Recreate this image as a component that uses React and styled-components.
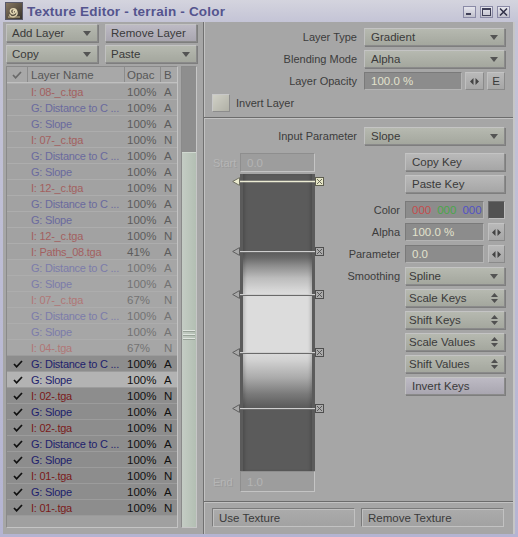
import React from 'react';
import styled, { createGlobalStyle } from 'styled-components';

const Global = createGlobalStyle`
  html, body { margin: 0; padding: 0; background: #a6a6a6; }
  body { font-family: "Liberation Sans", Arial, sans-serif; font-size: 11px; color: #333; }
  * { box-sizing: border-box; }
`;

const Window = styled.div`
  width: 518px;
  height: 537px;
  display: flex;
  flex-direction: column;
  background: linear-gradient(to bottom, #d4d4de, #c4c4d6 22px, #b4b4d2);
  padding: 0 3px 3px 3px;
  overflow: hidden;
`;

const TitleBar = styled.div`
  height: 22px;
  flex: none;
  display: flex;
  align-items: center;
  padding: 0 5px 0 2px;
  gap: 4px;
`;

const TitleText = styled.div`
  flex: 1;
  font-family: "Liberation Sans", Arial, sans-serif;
  font-weight: bold;
  font-size: 13.5px;
  color: #54548e;
  letter-spacing: 0.2px;
  padding-top: 1px;
`;

const WinButtons = styled.div`
  display: flex;
  gap: 4px;
  padding-top: 2px;
`;

const WinButton = styled.div`
  width: 13px;
  height: 12px;
  background: linear-gradient(#e6e6ee, #c0c0cc);
  border: 1px solid #8a8aa6;
  display: flex;
  align-items: center;
  justify-content: center;
`;

const Main = styled.div`
  flex: 1;
  display: flex;
  background: #a6a6a6;
  min-height: 0;
`;

const LeftPanel = styled.div`
  width: 200px;
  flex: none;
  display: flex;
  flex-direction: column;
  padding: 2px 4px 6px 3px;
`;

const ButtonGrid = styled.div`
  display: grid;
  grid-template-columns: 92px 92px;
  column-gap: 7px;
  row-gap: 3px;
`;

const Button = styled.div`
  height: 18px;
  min-width: 0;
  display: flex;
  align-items: center;
  justify-content: space-between;
  padding: 0 ${p => (p.$pad ?? 6)}px 0 ${p => (p.$pad ?? 6)}px;
  background: ${p => p.$tint
    ? 'linear-gradient(#bdbac4, #a9a6b0)'
    : 'linear-gradient(#b9b9b9, #a6a6a6)'};
  border: 1px solid #8a8a8a;
  border-top-color: #c4c4c4;
  border-left-color: #c0c0c0;
  box-shadow: 1px 1px 0 #7e7e7e;
  color: #3a3a3a;
  font-size: 11.5px;
  white-space: nowrap;
`;

const Dropdown = styled(Button)`
  background: linear-gradient(#b6b9b0, #a4a79e);
  padding: 0 6px 0 ${p => (p.$pad ?? 6)}px;
`;

const ListArea = styled.div`
  flex: 1;
  margin-top: 3px;
  display: flex;
  gap: 3px;
  min-height: 0;
`;

const ListBox = styled.div`
  width: 172px;
  display: flex;
  flex-direction: column;
  background: #a1a1a1;
  border: 1px solid #8a8a8a;
  border-right-color: #c4c4c4;
  border-bottom-color: #c4c4c4;
  overflow: hidden;
`;

const Cols = styled.div`
  display: grid;
  grid-template-columns: 20px 97px 36px 1fr;
  height: 16px;
  align-items: center;
`;

const HeaderRow = styled(Cols)`
  background: #a8a8a8;
  border-bottom: 1px solid #c0c0c0;
  color: #575757;
  height: 16px;
`;

const HeaderCell = styled.div`
  height: 100%;
  display: flex;
  align-items: center;
  justify-content: ${p => (p.$center ? 'center' : 'flex-start')};
  padding-left: ${p => p.$pl ?? 0}px;
  border-left: ${p => (p.$first ? 'none' : '1px solid #8c8c8c')};
  font-size: 11.5px;
`;

const Row = styled(Cols)`
  background: ${p => (p.$sel ? '#b3b3b3' : p.$checked ? '#8d8d8d' : p.$faint ? '#a6a6a6' : '#a2a2a2')};
  border-top: 1px solid ${p => (p.$checked ? '#9c9c9c' : '#adadad')};
  font-size: 11.5px;
`;

const CheckCell = styled.div`
  display: flex;
  align-items: center;
  justify-content: center;
  padding-left: 1px;
`;

const NameCell = styled.div`
  padding-left: 4px;
  white-space: nowrap;
  overflow: hidden;
  font-size: 11px;
  letter-spacing: -0.25px;
  color: ${p => p.$color};
`;

const NumCell = styled.div`
  padding-left: ${p => p.$pl}px;
  white-space: nowrap;
  color: ${p => p.$color};
`;

const ListFill = styled.div`
  flex: 1;
  background: #a0a0a0;
  border-top: 1px solid #9a9a9a;
`;

const Scrollbar = styled.div`
  width: 16px;
  display: flex;
  flex-direction: column;
  border: 1px solid #8a8a8a;
  border-right-color: #c6c6c6;
  border-bottom-color: #c6c6c6;
  background: #8f8f8f;
`;

const ScrollTrack = styled.div`
  height: 85px;
  flex: none;
  background: #8e8e8e;
`;

const ScrollThumb = styled.div`
  flex: 1;
  background: linear-gradient(to right, #c4ccc4, #b3bfb3);
  border-top: 1px solid #d0d8d0;
  display: flex;
  flex-direction: column;
  align-items: center;
  padding-top: 177px;
  gap: 3px;
`;

const Grip = styled.div`
  width: 12px;
  height: 1px;
  background: #e0e6e0;
  box-shadow: 0 1px 0 #98a298;
`;

const RightPanel = styled.div`
  flex: 1;
  display: flex;
  flex-direction: column;
  border-left: 1px solid #707070;
  box-shadow: inset 1px 0 0 #c2c2c2;
  border-right: 2px solid #c6c6c6;
`;

const TopSection = styled.div`
  display: flex;
  flex-direction: column;
  gap: 4px;
  padding: 6px 8px 5px 8px;
`;

const FieldRow = styled.div`
  display: grid;
  grid-template-columns: 1fr ${p => p.$w}px;
  column-gap: ${p => p.$gap ?? 7}px;
  align-items: center;
  height: 18px;
  margin-top: ${p => p.$mt ?? 0}px;
`;

const Label = styled.div`
  text-align: right;
  color: #3c3c3c;
  font-size: 11px;
  white-space: nowrap;
`;

const Inline = styled.div`
  display: flex;
  gap: ${p => p.$gap ?? 3}px;
  height: 18px;
  min-width: 0;
`;

const ValueField = styled.div`
  flex: 1;
  min-width: 0;
  height: 18px;
  display: flex;
  align-items: center;
  gap: 6px;
  padding-left: 6px;
  background: #8c8c8c;
  border: 1px solid #7a7a7a;
  border-right-color: #b4b4b4;
  border-bottom-color: #b4b4b4;
  color: #e2e2cc;
  font-size: 11.5px;
  white-space: nowrap;
  overflow: hidden;
`;

const ColorNum = styled.span`
  color: ${p => p.$c};
`;

const SmallButton = styled.div`
  width: ${p => p.$w}px;
  flex: none;
  height: 18px;
  display: flex;
  align-items: center;
  justify-content: center;
  background: linear-gradient(#b9b9b9, #a6a6a6);
  border: 1px solid #8a8a8a;
  border-top-color: #c4c4c4;
  border-left-color: #c0c0c0;
  color: #3a3a3a;
  font-size: 11.5px;
`;

const Swatch = styled.div`
  width: 17px;
  flex: none;
  height: 18px;
  background: #525252;
  border: 1px solid #bcbcbc;
  border-top-color: #6a6a6a;
  border-left-color: #6a6a6a;
`;

const CheckRow = styled.div`
  display: flex;
  align-items: center;
  gap: 6px;
  height: 18px;
`;

const CheckBox = styled.div`
  width: 18px;
  height: 18px;
  background: linear-gradient(135deg, #d0d0c6, #b0b0a6);
  border: 1px solid #8c8c8c;
  border-top-color: #c8c8c8;
  border-left-color: #c8c8c8;
`;

const Divider = styled.div`
  height: 2px;
  flex: none;
  border-top: 1px solid #6c6c6c;
  border-bottom: 1px solid #c2c2c2;
`;

const GradientSection = styled.div`
  flex: 1;
  display: flex;
  flex-direction: column;
  padding: 8px 8px 0 8px;
  min-height: 0;
`;

const SectionBody = styled.div`
  display: flex;
  margin-top: 8px;
`;

const GradientCol = styled.div`
  display: grid;
  grid-template-columns: 28px 75px;
  grid-template-rows: 19px 299px 21px;
  align-items: center;
  margin-right: 8px;
`;

const DimLabel = styled.div`
  color: #b6b6b6;
  font-size: 11px;
  padding-left: 1px;
  text-shadow: 1px 1px 0 #9a9a9a;
`;

const DimField = styled.div`
  height: ${p => p.$h}px;
  align-self: ${p => p.$align};
  display: flex;
  align-items: center;
  padding-left: 6px;
  background: #9d9d9d;
  border: 1px solid #8e8e8e;
  border-right-color: #c4c4c4;
  border-bottom-color: #c4c4c4;
  color: #b4b4b4;
  font-size: 11.5px;
`;

const Bar = styled.div`
  grid-column: 2;
  align-self: stretch;
  margin-top: 2px;
  position: relative;
  background: #5b5b5b;
  padding: 0 3px;
  display: flex;
`;

const BarFill = styled.div`
  flex: 1;
  background: linear-gradient(to bottom,
    #5b5b5b 0px, #5b5b5b 78px, #6a6a6a 84px, #8e8e8e 92px, #bcbcbc 104px,
    #d6d6d6 116px, #dcdcdc 120px, #dcdcdc 178px, #d2d2d2 186px, #aaaaaa 204px,
    #7a7a7a 220px, #5e5e5e 232px, #5b5b5b 234px, #5b5b5b 100%);
  box-shadow: inset 3px 0 3px -1px rgba(0,0,0,0.15), inset -3px 0 3px -1px rgba(0,0,0,0.15);
`;

const KeyMark = styled.svg`
  position: absolute;
  left: -8px;
  top: ${p => p.$y - 4}px;
  overflow: visible;
`;

const ControlsCol = styled.div`
  flex: 1;
  display: flex;
  flex-direction: column;
  gap: 4px;
`;

const BottomBar = styled.div`
  height: 31px;
  flex: none;
  display: grid;
  grid-template-columns: 143px 143px;
  column-gap: 6px;
  padding: 5px 0 0 8px;
`;

const FlatButton = styled.div`
  height: 19px;
  display: flex;
  align-items: center;
  padding-left: 6px;
  background: linear-gradient(#ababab, #a2a2a2);
  border: 1px solid #7a7a7a;
  border-right-color: #c2c2c2;
  border-bottom-color: #c2c2c2;
  box-shadow: inset 1px 1px 0 #c0c0c0;
  color: #3a3a3a;
  font-size: 11.5px;
`;

/* ---------- icons ---------- */

const DownArrow = () => (
  <svg width="8" height="5" viewBox="0 0 8 5"><path d="M0 0 H8 L4 5 Z" fill="#545454" /></svg>
);

const LeftRight = () => (
  <svg width="9" height="7" viewBox="0 0 9 7">
    <path d="M0 3.5 L3.5 0 V7 Z" fill="#444" />
    <path d="M9 3.5 L5.5 0 V7 Z" fill="#444" />
  </svg>
);

const UpDown = () => (
  <svg width="7" height="10" viewBox="0 0 7 10">
    <path d="M0 4 L3.5 0 L7 4 Z" fill="#505050" />
    <path d="M0 6 L3.5 10 L7 6 Z" fill="#505050" />
  </svg>
);

const Check = ({ color = '#111' }) => (
  <svg width="10" height="8" viewBox="0 0 10 8">
    <path d="M1 4 L3.6 6.8 L9 1" fill="none" stroke={color} strokeWidth="1.7" />
  </svg>
);

const AppIcon = () => (
  <svg width="18" height="18" viewBox="0 0 18 18">
    <defs>
      <linearGradient id="ig" x1="0" y1="0" x2="1" y2="1">
        <stop offset="0" stopColor="#8a7a62" />
        <stop offset="1" stopColor="#34302a" />
      </linearGradient>
    </defs>
    <rect x="0.5" y="0.5" width="17" height="17" fill="url(#ig)" stroke="#5a5a6a" />
    <path d="M9 10.5 a1.2 1.2 0 1 1 1.6 -1.4 a2.6 2.6 0 1 1 -3.6 -2.2 a4 4 0 1 1 -2.6 5.6"
      fill="none" stroke="#e4d8b4" strokeWidth="1.4" />
    <path d="M3 15 L15 15" stroke="#c8b890" strokeWidth="1" />
  </svg>
);

const MinIcon = () => (
  <svg width="9" height="8" viewBox="0 0 9 8"><rect x="1" y="5" width="5" height="2" fill="#404058" /></svg>
);
const MaxIcon = () => (
  <svg width="9" height="8" viewBox="0 0 9 8"><rect x="0.5" y="0.5" width="8" height="7" fill="none" stroke="#404058" /><rect x="0" y="0" width="9" height="2" fill="#404058" /></svg>
);
const CloseIcon = () => (
  <svg width="9" height="8" viewBox="0 0 9 8"><path d="M1 0.5 L8 7.5 M8 0.5 L1 7.5" stroke="#303048" strokeWidth="1.5" /></svg>
);

const Key = ({ y, active }) => (
  <KeyMark $y={y} width="92" height="9" viewBox="0 0 92 9">
    {!active && <path d="M8 5.5 H83.5" stroke="#6a6a6a" strokeWidth="1" />}
    <path d="M8 4.5 H83.5" stroke={active ? '#ececd4' : '#cfcfcf'} strokeWidth={active ? 1.6 : 1.2} />
    <path d="M0.7 4.5 L7.5 0.6 V8.4 Z" fill={active ? '#ececd0' : '#a9a9a9'} stroke={active ? '#6e6e60' : '#5e5e5e'} strokeWidth="1" />
    <rect x="83.5" y="0.5" width="8" height="8" fill={active ? '#e6e6c6' : '#ababab'} stroke={active ? '#5e5e50' : '#4e4e4e'} />
    <path d="M85 2 L90 7 M90 2 L85 7" stroke={active ? '#5e5e50' : '#4e4e4e'} strokeWidth="0.9" />
  </KeyMark>
);

/* ---------- data ---------- */

const L = (t, n, o, b, extra = {}) => ({ t, n, o, b, ...extra });
const DIST = 'Distance to C ...';
const layers = [
  L('I', '08-_c.tga', '100%', 'A'),
  L('G', DIST, '100%', 'A'),
  L('G', 'Slope', '100%', 'A'),
  L('I', '07-_c.tga', '100%', 'N'),
  L('G', DIST, '100%', 'A'),
  L('G', 'Slope', '100%', 'A'),
  L('I', '12-_c.tga', '100%', 'N'),
  L('G', DIST, '100%', 'A'),
  L('G', 'Slope', '100%', 'A'),
  L('I', '12-_c.tga', '100%', 'N'),
  L('I', 'Paths_08.tga', '41%', 'A'),
  L('G', DIST, '100%', 'A', { faint: true }),
  L('G', 'Slope', '100%', 'A', { faint: true }),
  L('I', '07-_c.tga', '67%', 'N', { faint: true }),
  L('G', DIST, '100%', 'A', { faint: true }),
  L('G', 'Slope', '100%', 'A', { faint: true }),
  L('I', '04-.tga', '67%', 'N', { faint: true }),
  L('G', DIST, '100%', 'A', { checked: true }),
  L('G', 'Slope', '100%', 'A', { checked: true, sel: true }),
  L('I', '02-.tga', '100%', 'N', { checked: true }),
  L('G', 'Slope', '100%', 'A', { checked: true }),
  L('I', '02-.tga', '100%', 'N', { checked: true }),
  L('G', DIST, '100%', 'A', { checked: true }),
  L('G', 'Slope', '100%', 'A', { checked: true }),
  L('I', '01-.tga', '100%', 'N', { checked: true }),
  L('G', 'Slope', '100%', 'A', { checked: true }),
  L('I', '01-.tga', '100%', 'N', { checked: true }),
];

const colorsFor = (l) => {
  if (l.checked) return { name: l.t === 'I' ? '#7a1a1a' : '#1e1e6c', num: '#101010' };
  if (l.faint) return { name: l.t === 'I' ? '#b07676' : '#7c7caa', num: '#737373' };
  return { name: l.t === 'I' ? '#a26060' : '#6a6a9e', num: '#5c5c5c' };
};

const stepperItems = ['Scale Keys', 'Shift Keys', 'Scale Values', 'Shift Values'];

export default function App() {
  return (
    <>
      <Global />
      <Window>
        <TitleBar>
          <AppIcon />
          <TitleText>Texture Editor - terrain - Color</TitleText>
          <WinButtons>
            <WinButton><MinIcon /></WinButton>
            <WinButton><MaxIcon /></WinButton>
            <WinButton><CloseIcon /></WinButton>
          </WinButtons>
        </TitleBar>
        <Main>
          <LeftPanel>
            <ButtonGrid>
              <Dropdown $pad={5}>Add Layer<DownArrow /></Dropdown>
              <Button $tint $pad={5}>Remove Layer</Button>
              <Dropdown $pad={5}>Copy<DownArrow /></Dropdown>
              <Dropdown $pad={5}>Paste<DownArrow /></Dropdown>
            </ButtonGrid>
            <ListArea>
              <ListBox>
                <HeaderRow>
                  <HeaderCell $first $center><Check color="#6a6a6a" /></HeaderCell>
                  <HeaderCell $pl={3}>Layer Name</HeaderCell>
                  <HeaderCell $pl={2}>Opac</HeaderCell>
                  <HeaderCell $pl={3}>B</HeaderCell>
                </HeaderRow>
                {layers.map((l, i) => {
                  const c = colorsFor(l);
                  return (
                    <Row key={i} $checked={l.checked} $sel={l.sel} $faint={l.faint}>
                      <CheckCell>{l.checked && <Check />}</CheckCell>
                      <NameCell $color={c.name}>{l.t}: {l.n}</NameCell>
                      <NumCell $pl={3} $color={c.num}>{l.o}</NumCell>
                      <NumCell $pl={4} $color={c.num}>{l.b}</NumCell>
                    </Row>
                  );
                })}
                <ListFill />
              </ListBox>
              <Scrollbar>
                <ScrollTrack />
                <ScrollThumb>
                  <Grip /><Grip /><Grip />
                </ScrollThumb>
              </Scrollbar>
            </ListArea>
          </LeftPanel>

          <RightPanel>
            <TopSection>
              <FieldRow $w={141}>
                <Label>Layer Type</Label>
                <Dropdown>Gradient<DownArrow /></Dropdown>
              </FieldRow>
              <FieldRow $w={141}>
                <Label>Blending Mode</Label>
                <Dropdown>Alpha<DownArrow /></Dropdown>
              </FieldRow>
              <FieldRow $w={141}>
                <Label>Layer Opacity</Label>
                <Inline>
                  <ValueField>100.0 %</ValueField>
                  <SmallButton $w={19}><LeftRight /></SmallButton>
                  <SmallButton $w={18}>E</SmallButton>
                </Inline>
              </FieldRow>
              <CheckRow>
                <CheckBox />
                <Label>Invert Layer</Label>
              </CheckRow>
            </TopSection>
            <Divider />
            <GradientSection>
              <FieldRow $w={141}>
                <Label>Input Parameter</Label>
                <Dropdown>Slope<DownArrow /></Dropdown>
              </FieldRow>
              <SectionBody>
                <GradientCol>
                  <DimLabel>Start</DimLabel>
                  <DimField $h={19} $align="start">0.0</DimField>
                  <Bar>
                    <BarFill />
                    <Key y={7} active />
                    <Key y={77} />
                    <Key y={120} />
                    <Key y={178} />
                    <Key y={234} />
                  </Bar>
                  <DimLabel>End</DimLabel>
                  <DimField $h={21} $align="stretch">1.0</DimField>
                </GradientCol>
                <ControlsCol>
                  <FieldRow $w={100} $gap={5}>
                    <span />
                    <Button>Copy Key</Button>
                  </FieldRow>
                  <FieldRow $w={100} $gap={5}>
                    <span />
                    <Button>Paste Key</Button>
                  </FieldRow>
                  <FieldRow $w={100} $gap={5} $mt={4}>
                    <Label>Color</Label>
                    <Inline $gap={4}>
                      <ValueField>
                        <ColorNum $c="#c44c4c">000</ColorNum>
                        <ColorNum $c="#4aa64a">000</ColorNum>
                        <ColorNum $c="#5252c4">000</ColorNum>
                      </ValueField>
                      <Swatch />
                    </Inline>
                  </FieldRow>
                  <FieldRow $w={100} $gap={5}>
                    <Label>Alpha</Label>
                    <Inline $gap={4}>
                      <ValueField>100.0 %</ValueField>
                      <SmallButton $w={17}><LeftRight /></SmallButton>
                    </Inline>
                  </FieldRow>
                  <FieldRow $w={100} $gap={5}>
                    <Label>Parameter</Label>
                    <Inline $gap={4}>
                      <ValueField>0.0</ValueField>
                      <SmallButton $w={17}><LeftRight /></SmallButton>
                    </Inline>
                  </FieldRow>
                  <FieldRow $w={100} $gap={5}>
                    <Label>Smoothing</Label>
                    <Dropdown $pad={3}>Spline<DownArrow /></Dropdown>
                  </FieldRow>
                  {stepperItems.map((s) => (
                    <FieldRow key={s} $w={100} $gap={5}>
                      <span />
                      <Dropdown $pad={3}>{s}<UpDown /></Dropdown>
                    </FieldRow>
                  ))}
                  <FieldRow $w={100} $gap={5}>
                    <span />
                    <Button $tint>Invert Keys</Button>
                  </FieldRow>
                </ControlsCol>
              </SectionBody>
            </GradientSection>
            <Divider />
            <BottomBar>
              <FlatButton>Use Texture</FlatButton>
              <FlatButton>Remove Texture</FlatButton>
            </BottomBar>
          </RightPanel>
        </Main>
      </Window>
    </>
  );
}
